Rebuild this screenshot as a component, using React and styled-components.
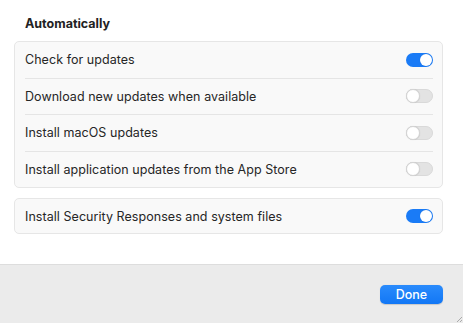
import React from "react";
import styled, { createGlobalStyle } from "styled-components";

const GlobalStyle = createGlobalStyle`
  html, body {
    margin: 0;
    padding: 0;
    background: #ffffff;
  }
  body {
    font-family: "Inter", "Liberation Sans", sans-serif;
    -webkit-font-smoothing: antialiased;
  }
`;

const Window = styled.div`
  position: relative;
  width: 463px;
  height: 323px;
  display: flex;
  flex-direction: column;
  background: #ffffff;
  overflow: hidden;
`;

const Content = styled.div`
  flex: 1;
  display: flex;
  flex-direction: column;
  padding: 17px 20px 0 14px;
`;

const Heading = styled.h3`
  margin: 0 0 10px 11px;
  font-size: 12.5px;
  font-weight: 700;
  color: #222222;
  line-height: 14px;
`;

const Group = styled.div`
  display: flex;
  flex-direction: column;
  background: #f9f9f9;
  border: 1px solid #e6e6e6;
  border-radius: 5px;
  margin-bottom: 10px;
`;

const Row = styled.div`
  box-sizing: border-box;
  height: ${(p) => p.h || 36.5}px;
  display: flex;
  align-items: center;
  justify-content: space-between;
  margin: 0 9px 0 10px;
  border-top: ${(p) => (p.first ? "none" : "1px solid #e5e5e5")};
`;

const Label = styled.span`
  font-size: 12.5px;
  color: #262626;
  letter-spacing: 0.05px;
`;

const Track = styled.button`
  position: relative;
  width: 27px;
  height: 14px;
  padding: 0;
  border-radius: 7px;
  border: ${(p) => (p.on ? "none" : "1px solid #d9d9d9")};
  background: ${(p) => (p.on ? "#1a7bf6" : "#e3e3e3")};
  cursor: pointer;
  box-sizing: border-box;
`;

const Knob = styled.span`
  position: absolute;
  top: ${(p) => (p.on ? "1px" : "-1px")};
  left: ${(p) => (p.on ? "14px" : "-1px")};
  width: ${(p) => (p.on ? 12 : 14)}px;
  height: ${(p) => (p.on ? 12 : 14)}px;
  border-radius: 50%;
  background: #ffffff;
  box-sizing: border-box;
  border: ${(p) => (p.on ? "none" : "1px solid #d4d4d4")};
  box-shadow: 0 0 1px rgba(0, 0, 0, 0.15);
`;

const Footer = styled.div`
  height: 59px;
  box-sizing: border-box;
  background: #ebebeb;
  border-top: 1px solid #dddddd;
  display: flex;
  justify-content: flex-end;
  align-items: flex-start;
  padding: 20px 20px 0 0;
`;

const DoneButton = styled.button`
  width: 63px;
  height: 19px;
  border: none;
  border-radius: 5px;
  background: linear-gradient(#2a8bfc, #1277f5);
  color: #ffffff;
  font-family: "Inter", "Liberation Sans", sans-serif;
  font-size: 12.5px;
  font-weight: 500;
  padding: 0;
  cursor: pointer;
  box-shadow: 0 0.5px 1px rgba(0, 0, 0, 0.15);
`;

const Grip = styled.svg`
  position: absolute;
  right: 1px;
  bottom: 1px;
`;

const Toggle = ({ on, onChange }) => (
  <Track on={on ? 1 : 0} onClick={onChange}>
    <Knob on={on ? 1 : 0} />
  </Track>
);

const initial = [
  { id: "check", label: "Check for updates", on: true },
  { id: "download", label: "Download new updates when available", on: false },
  { id: "macos", label: "Install macOS updates", on: false },
  { id: "apps", label: "Install application updates from the App Store", on: false },
];

const App = () => {
  const [items, setItems] = React.useState(initial);
  const [security, setSecurity] = React.useState(true);

  const flip = (id) =>
    setItems((list) => list.map((it) => (it.id === id ? { ...it, on: !it.on } : it)));

  return (
    <Window>
      <GlobalStyle />
      <Content>
        <Heading>Automatically</Heading>
        <Group>
          {items.map((it, i) => (
            <Row key={it.id} first={i === 0 ? 1 : 0} h={i === 0 ? 35.5 : 36.5}>
              <Label>{it.label}</Label>
              <Toggle on={it.on} onChange={() => flip(it.id)} />
            </Row>
          ))}
        </Group>
        <Group>
          <Row first={1} h={34}>
            <Label>Install Security Responses and system files</Label>
            <Toggle on={security} onChange={() => setSecurity(!security)} />
          </Row>
        </Group>
      </Content>
      <Footer>
        <DoneButton>Done</DoneButton>
      </Footer>
      <Grip width="6" height="6" viewBox="0 0 6 6">
        <path d="M1 6 L6 1 M4 6 L6 4" stroke="#9a9a9a" strokeWidth="0.8" />
      </Grip>
    </Window>
  );
};

export default App;
